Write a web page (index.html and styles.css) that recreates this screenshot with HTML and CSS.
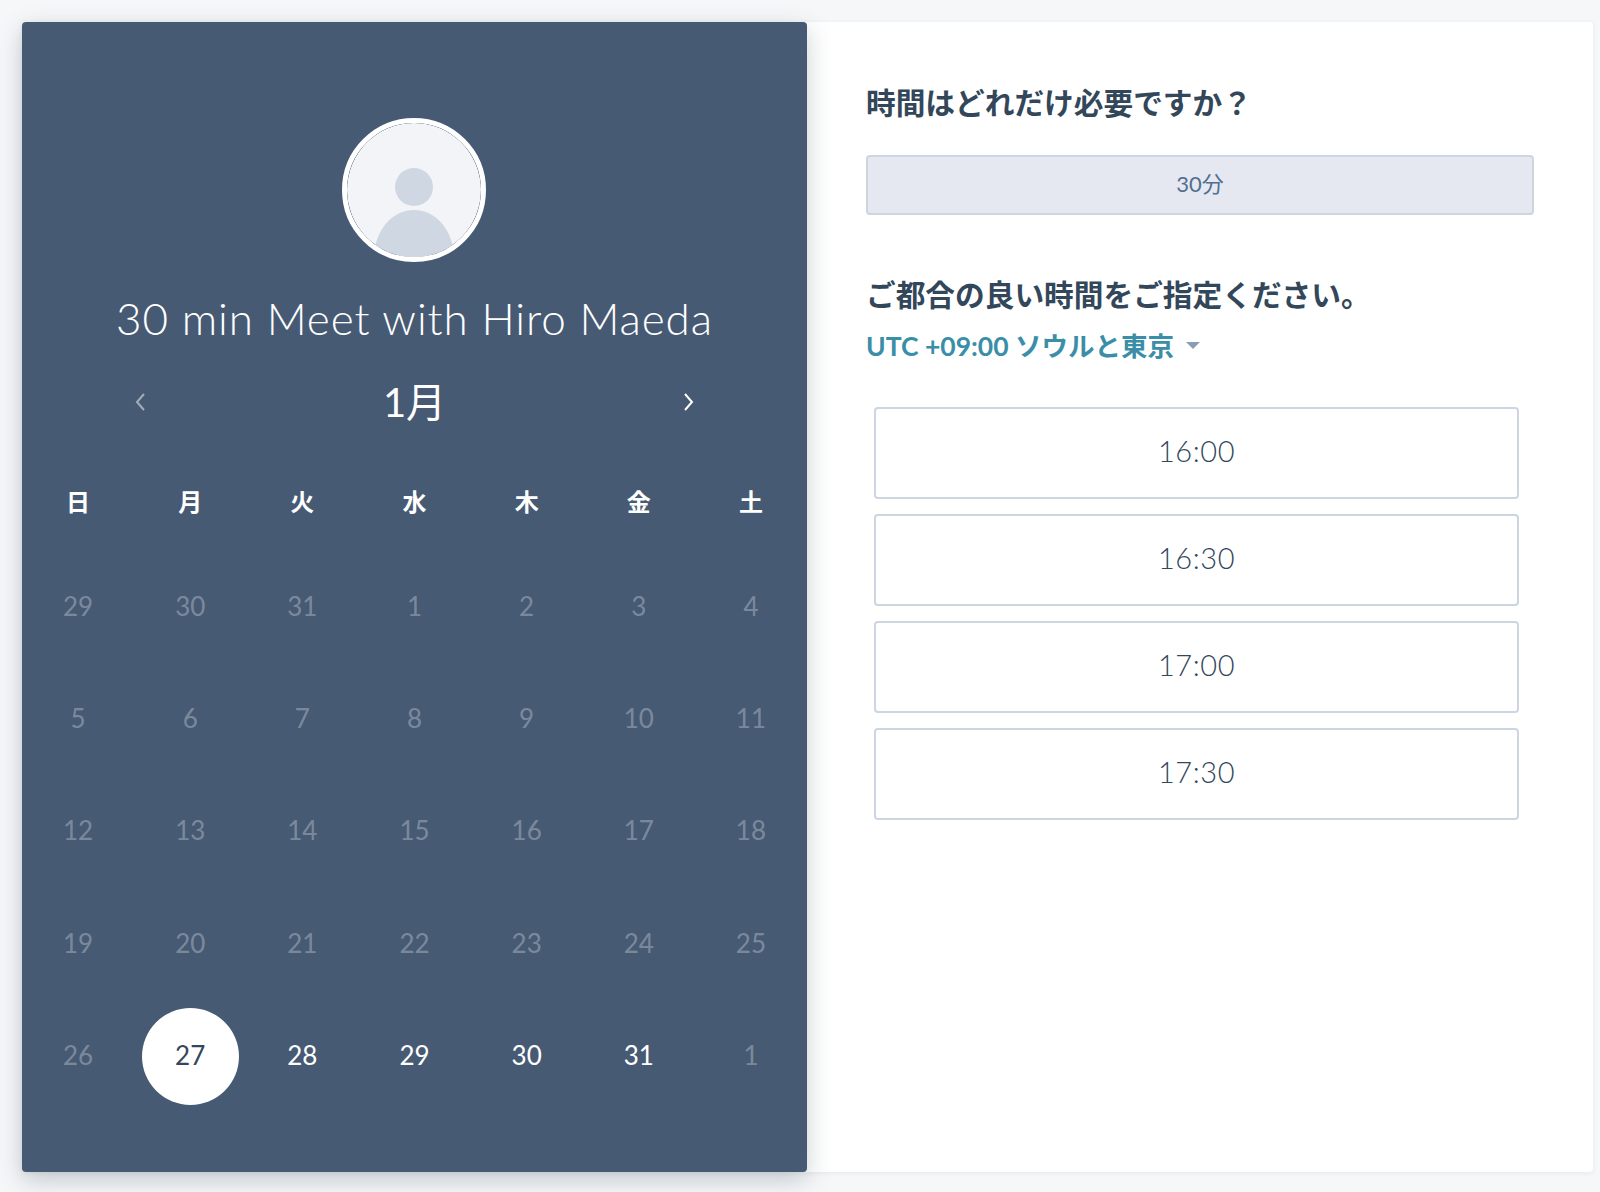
FILE: index.html
```html
<!DOCTYPE html>
<html lang="ja">
<head>
    <meta charset="UTF-8">
    <title>30 min Meet with Hiro Maeda</title>
    <link rel="stylesheet" href="styles.css">
</head>
<body>
    <div class="container">
        <div class="calendar-panel">
            <div class="avatar">
                <svg viewBox="0 0 134 134" width="134" height="134">
                    <circle cx="67" cy="67" r="67" fill="#f2f4f8"/>
                    <ellipse cx="67" cy="64" rx="19" ry="19" fill="#cfd7e3"/>
                    <path d="M27 130c3-26 20-43 40-43s37 17 40 43c-11 3-26 4-40 4s-29-1-40-4z" fill="#cfd7e3"/>
                </svg>
            </div>
            <h1 class="title">30 min Meet with Hiro Maeda</h1>
            <div class="month-nav">
                <svg class="arrow arrow-prev" viewBox="0 0 12 20" width="12" height="20"><path d="M10 2 3 10l7 8" fill="none" stroke="currentColor" stroke-width="2"/></svg>
                <div class="month">1月</div>
                <svg class="arrow" viewBox="0 0 12 20" width="12" height="20"><path d="m2 2 7 8-7 8" fill="none" stroke="currentColor" stroke-width="2"/></svg>
            </div>
            <div class="week-row">
                <div>日</div><div>月</div><div>火</div><div>水</div><div>木</div><div>金</div><div>土</div>
            </div>
            <div class="day-grid">
                <div class="day">29</div><div class="day">30</div><div class="day">31</div><div class="day">1</div><div class="day">2</div><div class="day">3</div><div class="day">4</div>
                <div class="day">5</div><div class="day">6</div><div class="day">7</div><div class="day">8</div><div class="day">9</div><div class="day">10</div><div class="day">11</div>
                <div class="day">12</div><div class="day">13</div><div class="day">14</div><div class="day">15</div><div class="day">16</div><div class="day">17</div><div class="day">18</div>
                <div class="day">19</div><div class="day">20</div><div class="day">21</div><div class="day">22</div><div class="day">23</div><div class="day">24</div><div class="day">25</div>
                <div class="day">26</div>
                <div class="day day-selected"><span>27</span></div>
                <div class="day day-open">28</div><div class="day day-open">29</div><div class="day day-open">30</div><div class="day day-open">31</div>
                <div class="day">1</div>
            </div>
        </div>
        <div class="time-panel">
            <h2 class="heading">時間はどれだけ必要ですか？</h2>
            <div class="duration">30分</div>
            <h2 class="heading heading-second">ご都合の良い時間をご指定ください。</h2>
            <div class="timezone">UTC +09:00 ソウルと東京<span class="caret"></span></div>
            <div class="slots">
                <div class="slot">16:00</div>
                <div class="slot">16:30</div>
                <div class="slot">17:00</div>
                <div class="slot">17:30</div>
            </div>
        </div>
    </div>
</body>
</html>
```

FILE: styles.css
```css
* {
    box-sizing: border-box;
    font-family: 'Lato', 'Noto Sans CJK JP', sans-serif;
}

html, body {
    height: 100%;
}

body {
    margin: 0;
    background: #f6f7f9;
    padding: 22px 7px 20px 22px;
    overflow: hidden;
}

.container {
    display: flex;
    height: 1150px;
    background: white;
    border-radius: 4px;
    box-shadow: 0 1px 5px rgba(45,62,80,0.08);
}

.calendar-panel {
    width: 785px;
    flex-shrink: 0;
    background: #475a74;
    color: white;
    border-radius: 4px;
    box-shadow: 0 8px 24px rgba(45,62,80,0.25);
    padding-top: 96px;
}

.avatar {
    width: 144px;
    height: 144px;
    margin: 0 0 0 320px;
    border: 5px solid white;
    border-radius: 50%;
    overflow: hidden;
}

.avatar svg {
    display: block;
}

.title {
    margin: 28px 0 0;
    height: 56px;
    line-height: 56px;
    text-align: center;
    font-size: 44px;
    font-weight: 300;
    letter-spacing: 0.9px;
}

.month-nav {
    display: flex;
    align-items: center;
    justify-content: space-between;
    margin-top: 28px;
    padding: 0 112px;
    height: 56px;
}

.month {
    padding-bottom: 4px;
    font-size: 40px;
    font-weight: 400;
}

.arrow {
    color: white;
}

.arrow-prev {
    opacity: 0.5;
}

.week-row {
    display: grid;
    grid-template-columns: repeat(7, 1fr);
    margin-top: 57px;
    height: 30px;
    line-height: 30px;
    text-align: center;
    font-size: 24px;
    font-weight: 700;
}

.day-grid {
    display: grid;
    grid-template-columns: repeat(7, 1fr);
    grid-auto-rows: 112.2px;
    margin-top: 35px;
}

.day {
    display: flex;
    align-items: center;
    justify-content: center;
    padding-bottom: 4px;
    font-size: 26px;
    font-weight: 400;
    color: rgba(255,255,255,0.3);
}

.day-open {
    color: white;
}

.day-selected {
    padding-bottom: 0;
    color: #33475b;
}

.day-selected span {
    display: flex;
    align-items: center;
    justify-content: center;
    width: 97px;
    height: 97px;
    padding-bottom: 4px;
    border-radius: 50%;
    background: white;
}

.time-panel {
    flex: 1;
    padding: 60px 59px 0 59px;
}

.heading {
    margin: 0;
    height: 42px;
    line-height: 42px;
    font-size: 29.7px;
    font-weight: 700;
    color: #33475b;
}

.duration {
    margin-top: 31px;
    height: 60px;
    line-height: 54px;
    text-align: center;
    font-size: 22px;
    font-weight: 400;
    color: #516f90;
    background: #e5e8f0;
    border: 2px solid #cbd6e2;
    border-radius: 4px;
}

.heading-second {
    margin-top: 59px;
}

.timezone {
    display: flex;
    align-items: center;
    margin-top: 8px;
    height: 40px;
    font-size: 26.5px;
    font-weight: 700;
    color: #3a8ea8;
}

.caret {
    width: 0;
    height: 0;
    margin-left: 12px;
    margin-top: 3px;
    border-left: 7px solid transparent;
    border-right: 7px solid transparent;
    border-top: 7px solid #8b9db4;
}

.slots {
    display: flex;
    flex-direction: column;
    gap: 15px;
    margin: 43px 15px 0 8px;
}

.slot {
    height: 92px;
    line-height: 84px;
    text-align: center;
    font-size: 29px;
    font-weight: 300;
    letter-spacing: 0.6px;
    color: #33475b;
    border: 2px solid #cbd6e2;
    border-radius: 4px;
}
```
